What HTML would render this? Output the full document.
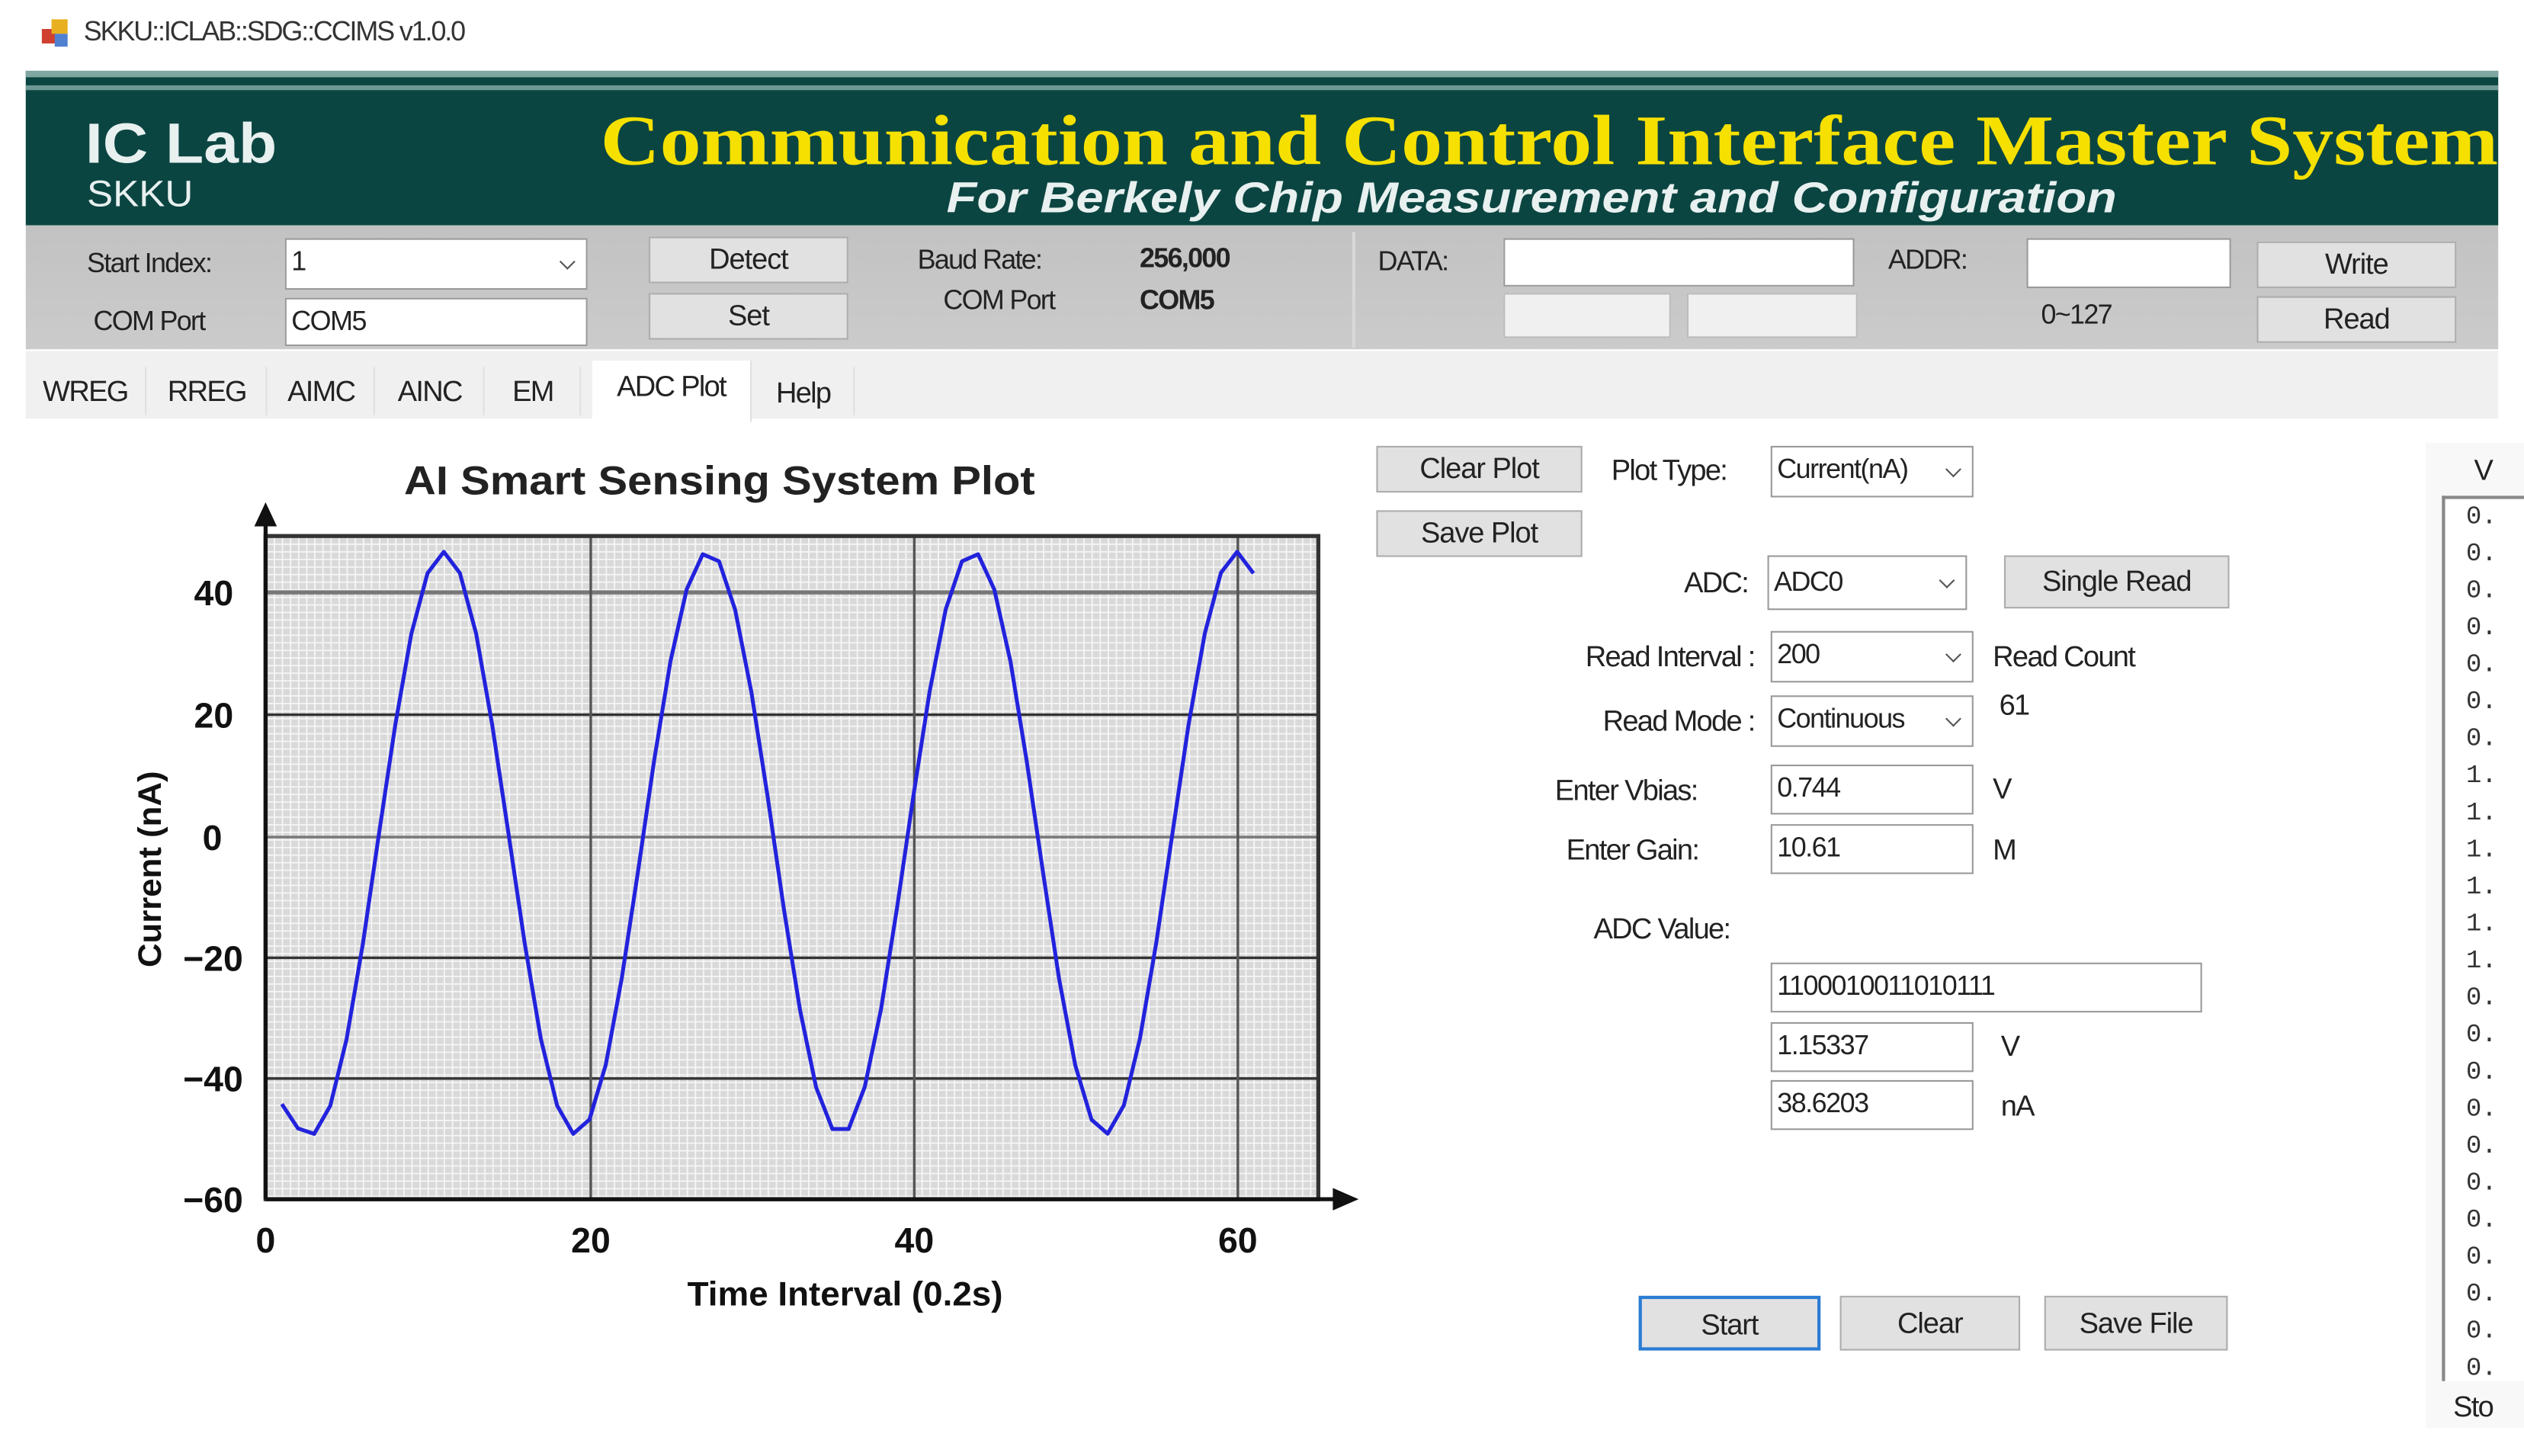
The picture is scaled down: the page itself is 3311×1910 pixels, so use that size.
<!DOCTYPE html>
<html><head><meta charset="utf-8">
<style>
html,body{margin:0;padding:0;background:#fff;overflow:hidden}
body{width:3311px;height:1910px;position:relative}
#s{position:absolute;left:0;top:0;width:1568px;height:905px;transform:scale(2.1116);transform-origin:0 0;font-family:"Liberation Sans",sans-serif;color:#222}
.a{position:absolute;white-space:nowrap}
.t{font-size:17px;letter-spacing:-0.8px}
.box{position:absolute;background:#fff;border:1px solid #9a9a9a;box-sizing:border-box;font-size:17px;letter-spacing:-0.7px;padding-left:3px;line-height:28px}
.btn{position:absolute;background:#e1e1e1;border:1px solid #adadad;box-sizing:border-box;text-align:center;font-size:18px;letter-spacing:-0.5px;color:#222}
.dd::after{content:"";position:absolute;right:8px;top:50%;width:6px;height:6px;border-right:1px solid #555;border-bottom:1px solid #555;transform:translateY(-70%) rotate(45deg)}
.tab{position:absolute;top:228px;height:30px;background:#f0f0f0;border-right:1px solid #e0e0e0;font-size:18px;letter-spacing:-0.8px;line-height:30px;text-align:center}
.r{text-align:right}
</style></head><body>
<div id="s">
<div class="a" style="left:24px;top:10px;width:20px;height:20px">
<div style="position:absolute;left:2px;top:8px;width:9px;height:9px;background:#d04030"></div>
<div style="position:absolute;left:8px;top:2px;width:10px;height:9px;background:#e8b020"></div>
<div style="position:absolute;left:10px;top:11px;width:8px;height:8px;background:#5080d0"></div>
</div>
<div class="a" style="left:52px;top:10px;font-size:17px;letter-spacing:-1px;color:#333">SKKU::ICLAB::SDG::CCIMS v1.0.0</div>

<div class="a" style="left:16px;top:44px;width:1536px;height:96px;background:#0b4541"></div>
<div class="a" style="left:16px;top:44px;width:1536px;height:4px;background:#7fa6a1"></div>
<div class="a" style="left:16px;top:53px;width:1536px;height:3px;background:#6d9893"></div>
<svg class="a" style="left:0;top:0" width="1568" height="150">
<text x="53" y="101" font-family="Liberation Sans" font-weight="bold" font-size="35" fill="#e8f0f0" textLength="119" lengthAdjust="spacingAndGlyphs">IC Lab</text>
<text x="54" y="128" font-family="Liberation Sans" font-size="23" fill="#e8f0f0" textLength="66" lengthAdjust="spacingAndGlyphs">SKKU</text>
<text x="373" y="102" font-family="Liberation Serif" font-weight="bold" font-size="44" fill="#f5e000" textLength="1179" lengthAdjust="spacingAndGlyphs">Communication and Control Interface Master System</text>
<text x="588" y="132" font-family="Liberation Sans" font-style="italic" font-weight="bold" font-size="27" fill="#e8f0f0" textLength="727" lengthAdjust="spacingAndGlyphs">For Berkely Chip  Measurement and Configuration</text>
</svg>

<div class="a" style="left:16px;top:140px;width:1536px;height:77px;background:linear-gradient(#c2c2c2,#cbcbcb)"></div>
<div class="a" style="left:840px;top:144px;width:2px;height:72px;background:#d8d8d8"></div>
<div class="a t" style="left:54px;top:154px">Start Index:</div>
<div class="box dd" style="left:177px;top:148px;width:188px;height:32px">1</div>
<div class="a t" style="left:58px;top:190px">COM Port</div>
<div class="box" style="left:177px;top:185px;width:188px;height:30px">COM5</div>
<div class="btn" style="left:403px;top:147px;width:124px;height:29px;line-height:27px">Detect</div>
<div class="btn" style="left:403px;top:182px;width:124px;height:29px;line-height:27px">Set</div>
<div class="a t" style="left:570px;top:152px">Baud Rate:</div>
<div class="a t" style="left:708px;top:151px;font-weight:bold">256,000</div>
<div class="a t" style="left:586px;top:177px">COM Port</div>
<div class="a t" style="left:708px;top:177px;font-weight:bold">COM5</div>
<div class="a t" style="left:856px;top:153px">DATA:</div>
<div class="box" style="left:934px;top:148px;width:218px;height:30px"></div>
<div class="box" style="left:934px;top:182px;width:104px;height:28px;background:#f0f0f0;border-color:#bbb"></div>
<div class="box" style="left:1048px;top:182px;width:106px;height:28px;background:#f0f0f0;border-color:#bbb"></div>
<div class="a t" style="left:1173px;top:152px">ADDR:</div>
<div class="box" style="left:1259px;top:148px;width:127px;height:31px"></div>
<div class="a t" style="left:1268px;top:186px">0~127</div>
<div class="btn" style="left:1402px;top:150px;width:124px;height:29px;line-height:27px">Write</div>
<div class="btn" style="left:1402px;top:184px;width:124px;height:29px;line-height:27px">Read</div>

<div class="a" style="left:16px;top:218px;width:1536px;height:42px;background:#f0f0f0"></div>
<div class="tab" style="left:16px;width:74px">WREG</div>
<div class="tab" style="left:92px;width:73px">RREG</div>
<div class="tab" style="left:167px;width:65px">AIMC</div>
<div class="tab" style="left:234px;width:66px">AINC</div>
<div class="tab" style="left:302px;width:58px">EM</div>
<div class="tab" style="left:368px;top:224px;height:38px;width:98px;background:#fff;line-height:32px">ADC Plot</div>
<div class="tab" style="left:468px;width:62px;line-height:32px">Help</div>

<svg class="a" style="left:0;top:262px" width="860" height="580" viewBox="0 262 860 580">
<defs>
<pattern id="g" x="165" y="333" width="5.03" height="4.71" patternUnits="userSpaceOnUse">
<rect width="5.03" height="4.71" fill="#d9d9d9"/>
<path d="M0 0.4H5.03M0.4 0V4.71" stroke="#f6f6f6" stroke-width="0.9"/>
</pattern>
</defs>
<text x="447" y="307" text-anchor="middle" font-family="Liberation Sans" font-weight="bold" font-size="25" fill="#222" textLength="392" lengthAdjust="spacingAndGlyphs">AI Smart Sensing System Plot</text>
<rect x="165" y="333" width="654" height="412" fill="url(#g)"/>
<g stroke="#555" stroke-width="1.6">
<line x1="165" y1="368" x2="819" y2="368" stroke="#777" stroke-width="2.5"/>
<line x1="165" y1="444" x2="819" y2="444" stroke="#333"/>
<line x1="165" y1="520" x2="819" y2="520" stroke="#777"/>
<line x1="165" y1="595" x2="819" y2="595" stroke="#333"/>
<line x1="165" y1="670" x2="819" y2="670" stroke="#333"/>
<line x1="367" y1="333" x2="367" y2="745"/>
<line x1="568" y1="333" x2="568" y2="745"/>
<line x1="769" y1="333" x2="769" y2="745"/>
</g>
<rect x="165" y="333" width="654" height="412" fill="none" stroke="#333" stroke-width="2.5"/>
<line x1="165" y1="745" x2="165" y2="322" stroke="#111" stroke-width="2.5"/>
<path d="M158 327 L165 312 L172 327Z" fill="#111"/>
<line x1="165" y1="745" x2="830" y2="745" stroke="#111" stroke-width="2.5"/>
<path d="M828 738 L844 745 L828 752Z" fill="#111"/>
<g font-family="Liberation Sans" font-weight="bold" font-size="22" fill="#111" text-anchor="end">
<text x="145" y="376">40</text><text x="145" y="452">20</text><text x="138" y="528">0</text>
<text x="151" y="603">−20</text><text x="151" y="678">−40</text><text x="151" y="753">−60</text>
</g>
<g font-family="Liberation Sans" font-weight="bold" font-size="22" fill="#111" text-anchor="middle">
<text x="165" y="778">0</text><text x="367" y="778">20</text><text x="568" y="778">40</text><text x="769" y="778">60</text>
</g>
<text x="525" y="811" text-anchor="middle" font-family="Liberation Sans" font-weight="bold" font-size="21" fill="#111" textLength="196" lengthAdjust="spacingAndGlyphs">Time Interval (0.2s)</text>
<text transform="translate(100,540) rotate(-90)" text-anchor="middle" font-family="Liberation Sans" font-weight="bold" font-size="20" fill="#111" textLength="122" lengthAdjust="spacingAndGlyphs">Current (nA)</text>
<polyline id="sine" fill="none" stroke="#2222dd" stroke-width="2.4" stroke-linejoin="round" points=""/>
</svg>

<div class="btn" style="left:855px;top:277px;width:128px;height:29px;line-height:27px">Clear Plot</div>
<div class="btn" style="left:855px;top:317px;width:128px;height:29px;line-height:27px">Save Plot</div>
<div class="a t" style="left:1001px;top:282px;font-size:18px">Plot Type:</div>
<div class="box dd" style="left:1100px;top:277px;width:126px;height:32px">Current(nA)</div>
<div class="a t r" style="left:986px;top:352px;width:100px;font-size:18px">ADC:</div>
<div class="box dd" style="left:1098px;top:345px;width:124px;height:34px;line-height:32px">ADC0</div>
<div class="btn" style="left:1245px;top:345px;width:140px;height:33px;line-height:31px">Single Read</div>
<div class="a t r" style="left:940px;top:398px;width:150px;font-size:18px">Read Interval :</div>
<div class="box dd" style="left:1100px;top:392px;width:126px;height:32px">200</div>
<div class="a t" style="left:1238px;top:398px;font-size:18px">Read Count</div>
<div class="a t" style="left:1242px;top:428px;font-size:18px">61</div>
<div class="a t r" style="left:940px;top:438px;width:150px;font-size:18px">Read Mode :</div>
<div class="box dd" style="left:1100px;top:432px;width:126px;height:32px">Continuous</div>
<div class="a t" style="left:966px;top:481px;font-size:18px">Enter Vbias:</div>
<div class="box" style="left:1100px;top:475px;width:126px;height:31px">0.744</div>
<div class="a t" style="left:1238px;top:480px;font-size:18px">V</div>
<div class="a t" style="left:973px;top:518px;font-size:18px">Enter Gain:</div>
<div class="box" style="left:1100px;top:512px;width:126px;height:31px">10.61</div>
<div class="a t" style="left:1238px;top:518px;font-size:18px">M</div>
<div class="a t" style="left:990px;top:567px;font-size:18px">ADC Value:</div>
<div class="box" style="left:1100px;top:598px;width:268px;height:31px">1100010011010111</div>
<div class="box" style="left:1100px;top:635px;width:126px;height:31px">1.15337</div>
<div class="a t" style="left:1243px;top:640px;font-size:18px">V</div>
<div class="box" style="left:1100px;top:671px;width:126px;height:31px">38.6203</div>
<div class="a t" style="left:1243px;top:677px;font-size:18px">nA</div>
<div class="btn" style="left:1018px;top:805px;width:113px;height:34px;line-height:32px;border:2px solid #2b7cd3">Start</div>
<div class="btn" style="left:1143px;top:805px;width:112px;height:34px;line-height:32px">Clear</div>
<div class="btn" style="left:1270px;top:805px;width:114px;height:34px;line-height:32px">Save File</div>

<div class="a" style="left:1507px;top:275px;width:61px;height:612px;background:#f8f8f8"></div>
<div class="a t" style="left:1537px;top:282px;font-size:18px">V</div>
<div class="a" style="left:1517px;top:308px;width:51px;height:548px;background:#fff;border-left:2px solid #888;border-top:2px solid #888"></div>
<div class="a" id="lst" style="left:1532px;top:310px;font-family:'Liberation Mono',monospace;font-size:16px;line-height:23px;color:#333"></div>
<div class="a t" style="left:1524px;top:864px;font-size:18px">Sto</div>
</div>
<script>
var p=[];for(var t=1;t<=61;t++){var v=48*Math.sin(2*Math.PI*(t-6.92)/16.33)-1;if(t==1)v=-44;if(t==2)v=-48;p.push((165+t*10.06).toFixed(1)+","+(520-v*3.77).toFixed(1));}
document.getElementById("sine").setAttribute("points",p.join(" "));
var s="";var seq="0000000111111000000000000";for(var i=0;i<24;i++)s+=seq[i]+".<br>";document.getElementById("lst").innerHTML=s;
</script>
</body></html>
